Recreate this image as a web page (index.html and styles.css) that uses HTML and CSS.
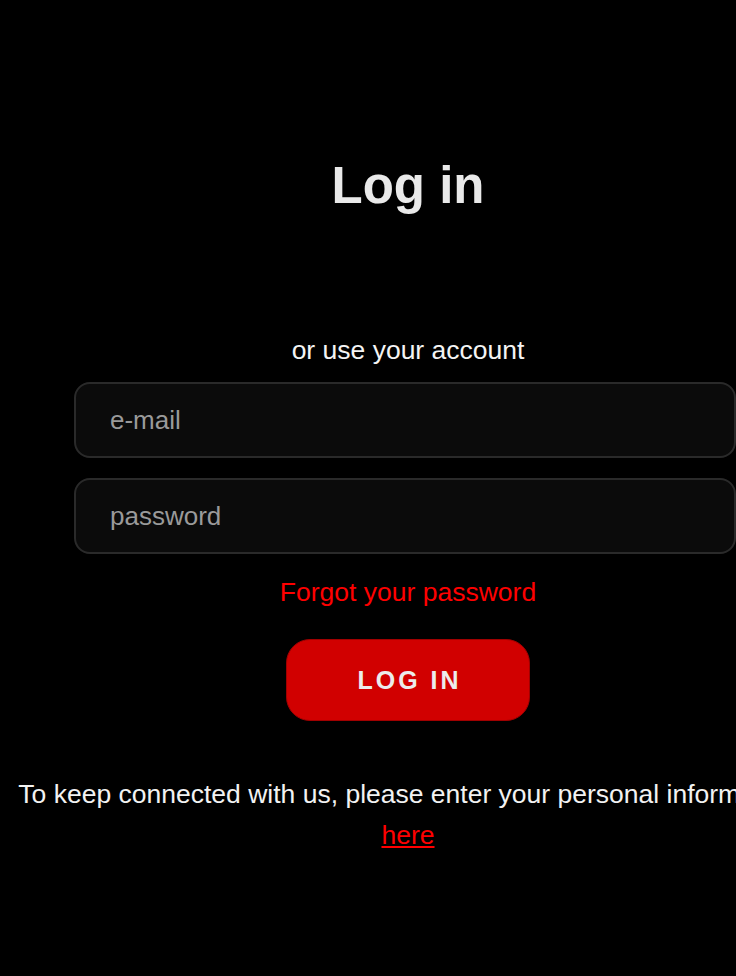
FILE: index.html
```html
<!DOCTYPE html>
<html lang="en">
<head>
<meta charset="utf-8">
<title>Log in</title>
<link rel="stylesheet" href="styles.css">
</head>
<body>
<div class="page">
  <form class="login">
    <h1 class="title">Log in</h1>
    <span class="subtitle">or use your account</span>
    <input class="field" type="email" placeholder="e-mail">
    <input class="field field-second" type="password" placeholder="password">
    <a class="forgot" href="#">Forgot your password</a>
    <button class="btn" type="button">LOG IN</button>
    <p class="note">To keep connected with us, please enter your personal information<br><a class="here" href="#">here</a></p>
  </form>
</div>
</body>
</html>
```
FILE: styles.css
```css
html, body {
  margin: 0;
  padding: 0;
  background: #000;
  overflow: hidden;
}
body {
  font-family: "Liberation Sans", Arial, sans-serif;
  color: #f2f2f2;
}
.page {
  width: 816px;
}
.login {
  display: flex;
  flex-direction: column;
  align-items: center;
  padding-top: 156px;
}
.title {
  margin: 0;
  font-size: 51px;
  line-height: 60px;
  font-weight: bold;
  color: #e9e9e9;
}
.subtitle {
  margin-top: 119px;
  font-size: 26.5px;
  line-height: 30px;
  color: #f4f4f4;
}
.field {
  align-self: flex-start;
  box-sizing: border-box;
  margin: 17px 0 0 74px;
  width: 662px;
  height: 76px;
  padding: 0 34px;
  background: #0b0b0b;
  border: 2px solid #2a2a2a;
  border-radius: 16px;
  font-family: "Liberation Sans", Arial, sans-serif;
  font-size: 26px;
  color: #ddd;
  outline: none;
}
.field::placeholder {
  color: #9a9a9a;
}
.field-second {
  margin-top: 20px;
}
.forgot {
  margin-top: 23px;
  font-size: 26.5px;
  line-height: 30px;
  color: #ff0000;
  text-decoration: none;
}
.btn {
  margin-top: 32px;
  width: 244px;
  height: 82px;
  background: #d10000;
  border: 1px solid #a00000;
  border-radius: 24px;
  color: #ececec;
  font-family: "Liberation Sans", Arial, sans-serif;
  font-size: 25px;
  font-weight: bold;
  letter-spacing: 3px;
  padding: 0 0 0 3px;
}
.note {
  margin: 53px 0 0;
  font-size: 26.5px;
  line-height: 41px;
  text-align: center;
  white-space: nowrap;
  color: #f2f2f2;
}
.here {
  color: #ff0000;
  text-decoration: underline;
}
```
